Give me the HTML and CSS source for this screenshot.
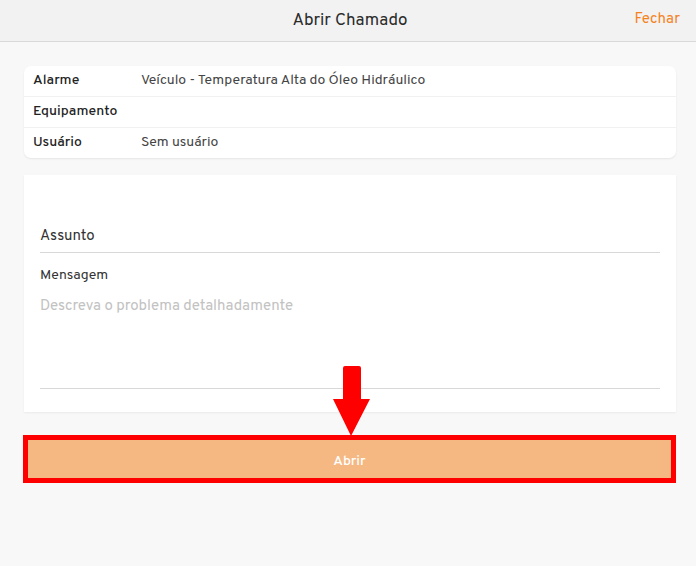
FILE: index.html
```html
<!DOCTYPE html>
<html lang="pt-BR">
<head>
    <meta charset="UTF-8">
    <meta name="viewport" content="width=device-width, initial-scale=1.0">
    <title>Abrir Chamado</title>
    <link rel="stylesheet" href="styles.css">
</head>
<body>

    <!-- Header -->
    <div class="header">
        <span class="header-title">Abrir Chamado</span>
        <a href="#" class="header-close">Fechar</a>
    </div>

    <div class="content">
        <div class="info-card">
            <div class="info-row">
                <span class="info-label">Alarme</span>
                <span class="info-value">Veículo - Temperatura Alta do Óleo Hidráulico</span>
            </div>
            <div class="info-row">
                <span class="info-label">Equipamento</span>
                <span class="info-value"></span>
            </div>
            <div class="info-row">
                <span class="info-label">Usuário</span>
                <span class="info-value">Sem usuário</span>
            </div>
        </div>

        <div class="form-card">
            <div class="field field-subject">
                <span class="field-label">Assunto</span>
            </div>
            <div class="field field-message">
                <span class="field-label field-label-small">Mensagem</span>
                <span class="field-placeholder">Descreva o problema detalhadamente</span>
            </div>
        </div>

        <div class="submit-frame">
            <button class="submit-button">Abrir</button>
        </div>
    </div>

    <!-- Arrow annotation -->
    <svg class="arrow" width="40" height="72" viewBox="0 0 40 72">
        <path d="M10 2 Q10 0 12 0 L26 0 Q28 0 28 2 L28 33 L37 33 L18 70 L0 33 L10 33 Z" fill="#ff0000"/>
    </svg>

</body>
</html>
```

FILE: styles.css
```css
body {
    margin: 0;
    padding: 0;
    background-color: #f8f8f8;
    font-family: 'Overpass', 'Roboto', sans-serif;
    color: #333;
    font-size: 14px;
}

/* Header */
.header {
    height: 41px;
    background-color: #f2f2f2;
    border-bottom: 1px solid #d9d9d9;
    display: flex;
    align-items: center;
    justify-content: center;
    position: relative;
}

.header-title {
    font-size: 17px;
    color: #2b2b2b;
    padding-left: 4px;
}

.header-close {
    position: absolute;
    right: 16px;
    top: 10px;
    color: #f5821f;
    text-decoration: none;
    font-size: 15px;
}

.content {
    padding: 24px 20px 0 24px;
}

/* Info card */
.info-card {
    background-color: #fff;
    border-radius: 7px;
    box-shadow: 0 1px 2px rgba(0, 0, 0, 0.08);
}

.info-row {
    display: flex;
    align-items: center;
    height: 28px;
    padding: 0 9px 2px 9px;
    border-bottom: 1px solid #f1f1f1;
}

.info-row:last-child {
    border-bottom: none;
}

.info-label {
    width: 108px;
    font-weight: 500;
    color: #222;
}

.info-value {
    color: #444;
}

/* Form card */
.form-card {
    margin-top: 17px;
    background-color: #fff;
    box-shadow: 0 1px 2px rgba(0, 0, 0, 0.06);
    padding: 46px 16px 23px 16px;
}

.field {
    display: flex;
    flex-direction: column;
    border-bottom: 1px solid #d8d8d8;
    font-size: 15px;
}

.field-subject {
    height: 31px;
    justify-content: center;
}

.field-label {
    color: #333;
    line-height: 20px;
}

.field-label-small {
    font-size: 14px;
}

.field-message {
    padding-top: 13px;
    height: 122px;
}

.field-placeholder {
    margin-top: 11px;
    color: #c2c2c2;
    line-height: 20px;
}

/* Submit */
.submit-frame {
    margin-top: 23px;
    margin-left: -1px;
    border: 5px solid #ff0000;
    height: 38px;
    display: flex;
}

.submit-button {
    flex: 1;
    border: none;
    padding: 4px 0 0 0;
    background-color: #f5b882;
    color: #fff;
    font-family: inherit;
    font-size: 14px;
    font-weight: 500;
    cursor: pointer;
}

.arrow {
    position: absolute;
    left: 333px;
    top: 366px;
}
```
